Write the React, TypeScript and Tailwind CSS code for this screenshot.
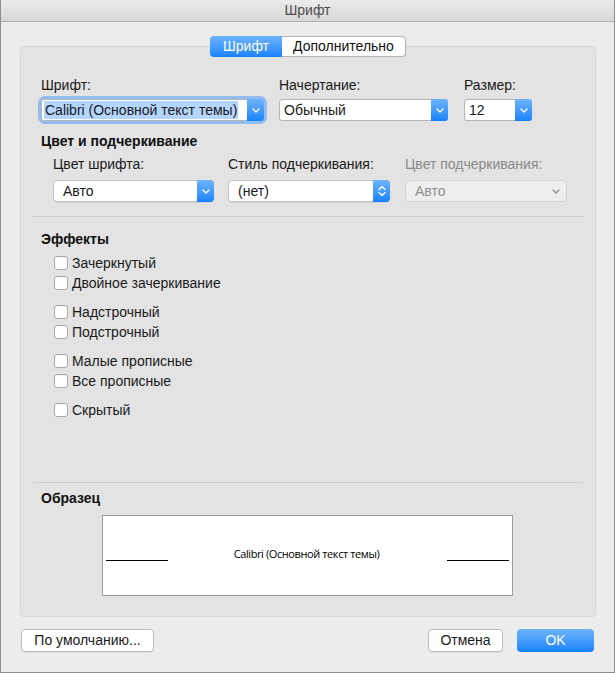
import React from 'react';

const font = { fontFamily: '"Liberation Sans", Arial, sans-serif' };

const Chevron = ({ color = 'white' }: { color?: string }) => (
  <svg width="8" height="5" viewBox="0 0 8 5" fill="none">
    <path d="M1 1l3 3 3-3" stroke={color} strokeWidth="1.4" strokeLinecap="round" strokeLinejoin="round" />
  </svg>
);

const UpDown = () => (
  <svg width="8" height="12" viewBox="0 0 8 12" fill="none">
    <path d="M1 4.5l3-3 3 3M1 7.5l3 3 3-3" stroke="white" strokeWidth="1.4" strokeLinecap="round" strokeLinejoin="round" />
  </svg>
);

function Combo({ value, width, highlight }: { value: string; width: string; highlight?: boolean }) {
  return (
    <div className={`flex h-[22px] ${width} rounded-[3px] border border-[#b5b5b5] bg-white`}>
      <div className="flex flex-1 items-center overflow-hidden pl-[2px] text-[14px] text-[#1a1a1a]">
        <span className={highlight ? 'bg-[#b4d5fe] px-[1px] leading-[18px] whitespace-nowrap' : 'pl-[2px] whitespace-nowrap'}>{value}</span>
      </div>
      <div className="-my-px -mr-px flex w-[17px] shrink-0 items-center justify-center rounded-r-[3px] bg-gradient-to-b from-[#6cb4fb] to-[#1482fc]">
        <Chevron />
      </div>
    </div>
  );
}

function Popup({ value, width, updown, disabled }: { value: string; width: string; updown?: boolean; disabled?: boolean }) {
  if (disabled) {
    return (
      <div className={`flex h-[22px] ${width} items-center justify-between rounded-[4px] border border-[#d3d3d3] bg-[#eeeeee] pl-[9px] pr-[6px] text-[14px] text-[#8e8e8e]`}>
        <span>{value}</span>
        <Chevron color="#8e8e8e" />
      </div>
    );
  }
  return (
    <div className={`flex h-[22px] ${width} rounded-[4px] border border-[#c4c4c4] bg-white shadow-[0_1px_0_rgba(0,0,0,0.08)]`}>
      <div className="flex flex-1 items-center pl-[9px] text-[14px] text-[#1a1a1a]">{value}</div>
      <div className="-my-px -mr-px flex w-[17px] items-center justify-center rounded-r-[4px] bg-gradient-to-b from-[#6cb4fb] to-[#1482fc]">
        {updown ? <UpDown /> : <Chevron />}
      </div>
    </div>
  );
}

function Check({ label }: { label: string }) {
  return (
    <div className="flex h-[20px] items-center gap-[4px] pl-[33px]">
      <div className="h-[14px] w-[14px] rounded-[3px] border border-[#a9a9a9] bg-white shadow-[inset_0_1px_0_rgba(0,0,0,0.04)]" />
      <span className="text-[14px] text-[#1a1a1a]">{label}</span>
    </div>
  );
}

export default function App() {
  return (
    <div style={font} className="flex h-[673px] w-[615px] flex-col border border-t-0 border-[#8f8f8f] bg-[#ececec]">
      {/* Title bar */}
      <div className="flex h-[22px] items-center justify-center border-b border-[#b1b1b1] bg-gradient-to-b from-[#ececec] to-[#d6d6d6] text-[14px] text-[#4d4d4d]">
        Шрифт
      </div>

      {/* Tabs */}
      <div className="relative z-10 mt-[14px] flex h-[21px] justify-center pl-[1px]">
        <div className="flex w-[72px] items-center justify-center rounded-l-[4px] bg-gradient-to-b from-[#6cb4fb] to-[#1482fc] text-[14px] text-white">
          Шрифт
        </div>
        <div className="flex w-[124px] items-center justify-center rounded-r-[4px] border border-l-0 border-[#b3b3b3] bg-white text-[14px] text-[#111]">
          Дополнительно
        </div>
      </div>

      {/* Panel */}
      <div className="ml-[19px] -mt-[11px] flex h-[571px] w-[576px] flex-col rounded-[4px] border border-[#d6d6d6] bg-[#e3e3e3]">
        <div className="flex pt-[30px]">
          <div className="ml-[20px] w-[238px]">
            <div className="h-[17px] text-[14px] leading-[17px] text-[#1a1a1a]">Шрифт:</div>
            <div className="mt-[5px] w-[223px] rounded-[4px] shadow-[0_0_0_3px_#93bdee]">
              <Combo value="Calibri (Основной текст темы)" width="w-[223px]" highlight />
            </div>
          </div>
          <div className="w-[185px]">
            <div className="h-[17px] text-[14px] leading-[17px] text-[#1a1a1a]">Начертание:</div>
            <div className="mt-[5px]">
              <Combo value="Обычный" width="w-[169px]" />
            </div>
          </div>
          <div>
            <div className="h-[17px] text-[14px] leading-[17px] text-[#1a1a1a]">Размер:</div>
            <div className="mt-[5px]">
              <Combo value="12" width="w-[68px]" />
            </div>
          </div>
        </div>

        <div className="ml-[20px] mt-[12px] text-[14px] font-bold leading-[17px] text-[#111]">Цвет и подчеркивание</div>

        <div className="mt-[6px] flex">
          <div className="ml-[32px] w-[175px]">
            <div className="text-[14px] leading-[17px] text-[#1a1a1a]">Цвет шрифта:</div>
            <div className="mt-[7px]">
              <Popup value="Авто" width="w-[161px]" />
            </div>
          </div>
          <div className="w-[177px]">
            <div className="text-[14px] leading-[17px] text-[#1a1a1a]">Стиль подчеркивания:</div>
            <div className="mt-[7px]">
              <Popup value="(нет)" width="w-[162px]" updown />
            </div>
          </div>
          <div>
            <div className="text-[14px] leading-[17px] text-[#8a8a8a]">Цвет подчеркивания:</div>
            <div className="mt-[7px]">
              <Popup value="Авто" width="w-[162px]" disabled />
            </div>
          </div>
        </div>

        <div className="mx-[12px] mt-[14px] h-px bg-[#cdcdcd]" />

        <div className="ml-[20px] mt-[14px] text-[14px] font-bold leading-[17px] text-[#111]">Эффекты</div>

        <div className="mt-[5px] flex flex-col">
          <Check label="Зачеркнутый" />
          <Check label="Двойное зачеркивание" />
          <div className="h-[9px]" />
          <Check label="Надстрочный" />
          <Check label="Подстрочный" />
          <div className="h-[9px]" />
          <Check label="Малые прописные" />
          <Check label="Все прописные" />
          <div className="h-[9px]" />
          <Check label="Скрытый" />
        </div>

        <div className="flex-1" />

        <div className="mx-[12px] h-px bg-[#cdcdcd]" />

        <div className="ml-[20px] mt-[7px] text-[14px] font-bold leading-[17px] text-[#111]">Образец</div>

        <div className="ml-[81px] mt-[8px] mb-[20px] flex h-[81px] w-[411px] flex-col border border-[#9c9c9c] bg-white">
          <div className="mt-[31px] flex items-end">
            <div className="ml-[3px] w-[62px] border-b border-black" />
            <div className="flex-1 pb-[1px] pr-[2px] text-center text-[11px] leading-[13px] text-black" style={{ fontFamily: '"Open Sans", "Liberation Sans", sans-serif', letterSpacing: '-0.4px' }}>
              Calibri (Основной текст темы)
            </div>
            <div className="mr-[3px] w-[62px] border-b border-black" />
          </div>
        </div>
      </div>

      {/* Buttons */}
      <div className="mx-[20px] mt-[12px] flex h-[23px]">
        <div className="flex w-[133px] items-center justify-center rounded-[4px] border border-[#bcbcbc] bg-white text-[14px] text-[#1a1a1a] shadow-[0_1px_0_rgba(0,0,0,0.06)]">
          По умолчанию...
        </div>
        <div className="flex-1" />
        <div className="flex w-[75px] items-center justify-center rounded-[4px] border border-[#bcbcbc] bg-white text-[14px] text-[#1a1a1a] shadow-[0_1px_0_rgba(0,0,0,0.06)]">
          Отмена
        </div>
        <div className="ml-[14px] flex w-[77px] items-center justify-center rounded-[4px] bg-gradient-to-b from-[#6cb4fb] to-[#1482fc] text-[14px] text-white">
          OK
        </div>
      </div>
    </div>
  );
}
